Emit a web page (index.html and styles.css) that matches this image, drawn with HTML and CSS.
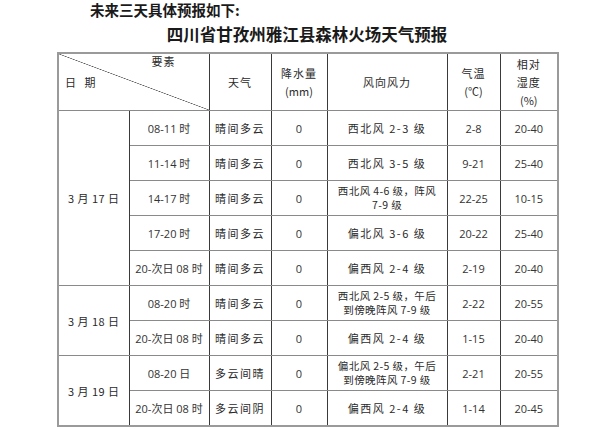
FILE: index.html
```html
<!DOCTYPE html>
<html lang="zh-CN">
<head>
<meta charset="utf-8">
<link rel="stylesheet" href="styles.css">
</head>
<body>
<div class="page">
  <p class="intro">未来三天具体预报如下:</p>
  <h1 class="title">四川省甘孜州雅江县森林火场天气预报</h1>
  <table class="forecast">
    <colgroup>
      <col class="c-date"><col class="c-time"><col class="c-wx"><col class="c-rain"><col class="c-wind"><col class="c-temp"><col class="c-hum">
    </colgroup>
    <thead>
      <tr class="head">
        <th colspan="2" class="corner">
          <div class="corner-box">
            <span class="corner-top">要素</span>
            <span class="corner-left">日 期</span>
          </div>
        </th>
        <th>天气</th>
        <th>降水量<br><span class="unit">(mm)</span></th>
        <th>风向风力</th>
        <th>气温<br><span class="unit">(℃)</span></th>
        <th>相对<br>湿度<br><span class="unit">(%)</span></th>
      </tr>
    </thead>
    <tbody>
      <tr><td rowspan="5" class="date">3 月 17 日</td><td class="num">08-11 时</td><td class="cn">晴间多云</td><td class="num">0</td><td class="cn">西北风 2-3 级</td><td class="num">2-8</td><td class="num">20-40</td></tr>
      <tr><td class="num">11-14 时</td><td class="cn">晴间多云</td><td class="num">0</td><td class="cn">西北风 3-5 级</td><td class="num">9-21</td><td class="num">25-40</td></tr>
      <tr><td class="num">14-17 时</td><td class="cn">晴间多云</td><td class="num">0</td><td class="cn two">西北风 4-6 级，阵风<br>7-9 级</td><td class="num">22-25</td><td class="num">10-15</td></tr>
      <tr><td class="num">17-20 时</td><td class="cn">晴间多云</td><td class="num">0</td><td class="cn">偏北风 3-6 级</td><td class="num">20-22</td><td class="num">25-40</td></tr>
      <tr><td class="num">20-次日 08 时</td><td class="cn">晴间多云</td><td class="num">0</td><td class="cn">偏西风 2-4 级</td><td class="num">2-19</td><td class="num">20-40</td></tr>
      <tr><td rowspan="2" class="date">3 月 18 日</td><td class="num">08-20 时</td><td class="cn">晴间多云</td><td class="num">0</td><td class="cn two">西北风 2-5 级，午后<br>到傍晚阵风 7-9 级</td><td class="num">2-22</td><td class="num">20-55</td></tr>
      <tr><td class="num">20-次日 08 时</td><td class="cn">晴间多云</td><td class="num">0</td><td class="cn">偏西风 2-4 级</td><td class="num">1-15</td><td class="num">20-40</td></tr>
      <tr><td rowspan="2" class="date">3 月 19 日</td><td class="num">08-20 日</td><td class="cn">多云间晴</td><td class="num">0</td><td class="cn two">偏北风 2-5 级，午后<br>到傍晚阵风 7-9 级</td><td class="num">2-21</td><td class="num">20-55</td></tr>
      <tr><td class="num">20-次日 08 时</td><td class="cn">多云间阴</td><td class="num">0</td><td class="cn">偏西风 2-4 级</td><td class="num">1-14</td><td class="num">20-45</td></tr>
    </tbody>
  </table>
</div>
</body>
</html>
```
FILE: styles.css
```css
html, body {
  margin: 0;
  padding: 0;
  background: #ffffff;
}
body {
  font-family: "Noto Sans CJK SC", "Liberation Sans", sans-serif;
  color: #2a2a2a;
}
.page {
  width: 500px;
  margin-left: 57px;
}
.intro {
  margin: 0 0 0 33px;
  height: 20px;
  line-height: 20px;
  font-size: 14.5px;
  font-weight: bold;
  color: #1a1a1a;
}
.title {
  margin: 0;
  height: 32px;
  line-height: 28px;
  text-align: center;
  font-size: 16.5px;
  font-weight: bold;
  color: #1a1a1a;
}
.forecast {
  width: 500px;
  table-layout: fixed;
  border-collapse: collapse;
  border: 2px solid #9a9a9a;
}
.c-date { width: 71px; }
.c-time { width: 80px; }
.c-wx { width: 62px; }
.c-rain { width: 56px; }
.c-wind { width: 120px; }
.c-temp { width: 53px; }
.c-hum { width: 58px; }
.forecast th,
.forecast td {
  border-left: 1px solid #3a3a3a;
  border-right: 1px solid #3a3a3a;
  border-top: 1px solid #8a8a8a;
  border-bottom: 1px solid #8a8a8a;
  padding: 0;
  text-align: center;
  vertical-align: middle;
  font-size: 11px;
  font-weight: normal;
}
.head th {
  height: 56px;
  line-height: 18px;
  letter-spacing: 1px;
}
.unit {
  letter-spacing: 0;
}
.forecast tbody td {
  height: 34px;
}
.cn {
  letter-spacing: 1.5px;
}
.forecast td.two {
  line-height: 14px;
  letter-spacing: 0.4px;
  font-size: 10.5px;
}
.num {
  font-family: "Open Sans", "Noto Sans CJK SC", sans-serif;
  font-size: 11px;
  color: #333333;
}
.date {
  letter-spacing: 0.5px;
}
.corner {
  background: linear-gradient(to top right, transparent calc(50% - 0.6px), #555555 50%, transparent calc(50% + 0.6px));
}
.corner-box {
  display: flex;
  flex-direction: column;
  height: 56px;
}
.corner-top {
  align-self: flex-end;
  margin-right: 33px;
  margin-top: 0;
  line-height: 14px;
  letter-spacing: 1px;
}
.corner-left {
  align-self: flex-start;
  margin-left: 6px;
  margin-top: 7px;
  line-height: 14px;
  letter-spacing: 3px;
}
```
